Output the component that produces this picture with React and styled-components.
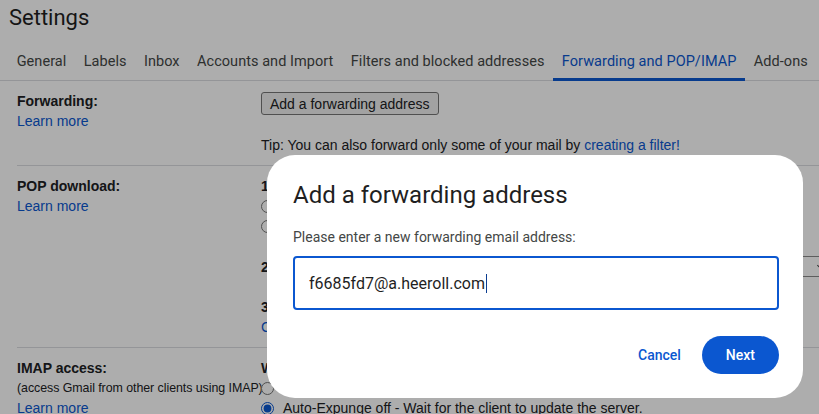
import styled, { createGlobalStyle } from "styled-components";

const GlobalStyle = createGlobalStyle`
  html, body {
    margin: 0;
    padding: 0;
    overflow: hidden;
    background: #fff;
  }

  body {
    font-family: "Liberation Sans", Arial, sans-serif;
    color: #202124;
  }
`;

const Page = styled.div`
  width: 819px;
  height: 414px;
  overflow: hidden;
`;

const Title = styled.h1`
  margin: 0;
  padding: 4px 9px 0;
  font-family: Roboto, "Noto Sans", sans-serif;
  font-size: 22px;
  font-weight: 400;
  line-height: 28px;
  color: #1f1f1f;
`;

const TabBar = styled.div`
  display: flex;
  margin-top: 10px;
  padding-left: 8px;
  border-bottom: 1px solid #dadce0;
`;

const Tab = styled.div`
  position: relative;
  height: 38px;
  padding: 0 8.7px;
  display: flex;
  align-items: center;
  font-family: Roboto, "Noto Sans", sans-serif;
  font-size: 14.5px;
  letter-spacing: 0.05px;
  white-space: nowrap;
  color: ${(props) => (props.$active ? "#0b57d0" : "#444746")};

  ${(props) =>
    props.$active &&
    `
    &::after {
      content: "";
      position: absolute;
      left: 0;
      right: 0;
      bottom: -1px;
      height: 3px;
      background: #0b57d0;
    }
  `}
`;

const Content = styled.div`
  padding-left: 17px;
`;

const Section = styled.div`
  display: grid;
  grid-template-columns: 244px 1fr;
  padding: 10px 0;
  border-bottom: 1px solid #dadce0;
  font-size: 14px;
  line-height: 20px;
`;

const LabelCol = styled.div`
  display: flex;
  flex-direction: column;
  white-space: nowrap;
`;

const SectionLabel = styled.div`
  font-weight: 700;
`;

const SubLabel = styled.div`
  font-size: 12.4px;
  letter-spacing: -0.05px;
`;

const Link = styled.a`
  color: #0b57d0;
  text-decoration: none;
  cursor: pointer;
`;

const ValueCol = styled.div`
  display: flex;
  flex-direction: column;
  white-space: nowrap;
  min-width: 0;
`;

const PlainButton = styled.button`
  align-self: flex-start;
  height: 23px;
  margin-top: 1px;
  padding: 0 8px;
  border: 1px solid #767676;
  border-radius: 3px;
  background: #efefef;
  font-family: "Liberation Sans", Arial, sans-serif;
  font-size: 14px;
  color: #202124;
`;

const Tip = styled.div`
  margin-top: 20px;
`;

const Step = styled.div`
  font-weight: 700;
  margin-top: ${(props) => (props.$first ? "0" : "20px")};
`;

const StepRow = styled.div`
  display: flex;
  align-items: center;
  justify-content: space-between;
  height: 21px;
  margin-top: 20px;
  font-weight: 700;
`;

const FakeSelect = styled.div`
  position: relative;
  width: 260px;
  height: 19px;
  margin-right: -12px;
  border: 1px solid #8a8a8a;
  border-radius: 3px;
  padding-left: 8px;
  font-weight: 400;
  font-size: 13px;
  line-height: 19px;

  &::after {
    content: "";
    position: absolute;
    right: 7px;
    top: 6px;
    width: 4px;
    height: 4px;
    border-right: 1.5px solid #444;
    border-bottom: 1.5px solid #444;
    transform: rotate(45deg);
  }
`;

const RadioRow = styled.label`
  display: flex;
  align-items: center;
  height: 20px;
  gap: 9px;
`;

const Radio = styled.input.attrs({ type: "radio" })`
  width: 13px;
  height: 13px;
  margin: 1px 0 0;
  accent-color: #0b57d0;
`;

const Scrim = styled.div`
  position: fixed;
  inset: 0;
  background: rgba(0, 0, 0, 0.32);
`;

const Dialog = styled.div`
  position: fixed;
  left: 267px;
  top: 155px;
  width: 536px;
  height: 243px;
  box-sizing: border-box;
  padding: 24px 24px 24px 26px;
  border-radius: 28px;
  background: #fff;
  display: flex;
  flex-direction: column;
  font-family: Roboto, "Noto Sans", sans-serif;
`;

const DialogTitle = styled.h2`
  margin: 0;
  font-size: 24px;
  font-weight: 400;
  line-height: 32px;
  color: #1f1f1f;
`;

const DialogLabel = styled.div`
  margin-top: 16px;
  font-size: 14px;
  line-height: 20px;
  color: #444746;
`;

const InputBox = styled.div`
  margin-top: 9px;
  height: 54px;
  box-sizing: border-box;
  border: 2px solid #0b57d0;
  border-radius: 4px;
  padding-left: 14px;
  display: flex;
  align-items: center;
  font-size: 16px;
  color: #1f1f1f;
`;

const Caret = styled.span`
  display: inline-block;
  width: 1px;
  height: 19px;
  margin-left: 1px;
  background: #0b3d91;
`;

const Actions = styled.div`
  display: flex;
  justify-content: flex-end;
  align-items: center;
  margin-top: 26px;
`;

const TextButton = styled.button`
  height: 38px;
  padding: 0 12px;
  margin-right: 9px;
  border: none;
  background: none;
  font-family: Roboto, "Noto Sans", sans-serif;
  font-size: 14px;
  font-weight: 500;
  color: #0b57d0;
`;

const FilledButton = styled.button`
  height: 38px;
  padding: 0 24px;
  border: none;
  border-radius: 19px;
  background: #0b57d0;
  font-family: Roboto, "Noto Sans", sans-serif;
  font-size: 14px;
  font-weight: 500;
  color: #fff;
`;

const tabs = [
  "General",
  "Labels",
  "Inbox",
  "Accounts and Import",
  "Filters and blocked addresses",
  "Forwarding and POP/IMAP",
  "Add-ons",
];

export default function App() {
  return (
    <Page>
      <GlobalStyle />
      <Title>Settings</Title>
      <TabBar>
        {tabs.map((tab) => (
          <Tab key={tab} $active={tab === "Forwarding and POP/IMAP"}>
            {tab}
          </Tab>
        ))}
      </TabBar>

      <Content>
        <Section>
          <LabelCol>
            <SectionLabel>Forwarding:</SectionLabel>
            <Link>Learn more</Link>
          </LabelCol>
          <ValueCol>
            <PlainButton>Add a forwarding address</PlainButton>
            <Tip>
              Tip: You can also forward only some of your mail by{" "}
              <Link>creating a filter!</Link>
            </Tip>
          </ValueCol>
        </Section>

        <Section>
          <LabelCol>
            <SectionLabel>POP download:</SectionLabel>
            <Link>Learn more</Link>
          </LabelCol>
          <ValueCol>
            <Step $first>1. Status: POP is disabled</Step>
            <RadioRow>
              <Radio name="pop" />
              Enable POP for all mail
            </RadioRow>
            <RadioRow>
              <Radio name="pop" />
              Enable POP for mail that arrives from now on
            </RadioRow>
            <StepRow>
              <span>2. When messages are accessed with POP</span>
              <FakeSelect>keep Gmail's copy in the Inbox</FakeSelect>
            </StepRow>
            <Step>3. Configure your email client</Step>
            <Link>Configuration instructions</Link>
          </ValueCol>
        </Section>

        <Section>
          <LabelCol>
            <SectionLabel>IMAP access:</SectionLabel>
            <SubLabel>(access Gmail from other clients using IMAP)</SubLabel>
            <Link>Learn more</Link>
          </LabelCol>
          <ValueCol>
            <Step $first>When I mark a message in IMAP as deleted:</Step>
            <RadioRow>
              <Radio name="imap" />
              Auto-Expunge on - Immediately update the server. (default)
            </RadioRow>
            <RadioRow>
              <Radio name="imap" defaultChecked />
              Auto-Expunge off - Wait for the client to update the server.
            </RadioRow>
          </ValueCol>
        </Section>
      </Content>

      <Scrim />
      <Dialog>
        <DialogTitle>Add a forwarding address</DialogTitle>
        <DialogLabel>Please enter a new forwarding email address:</DialogLabel>
        <InputBox>
          f6685fd7@a.heeroll.com
          <Caret />
        </InputBox>
        <Actions>
          <TextButton>Cancel</TextButton>
          <FilledButton>Next</FilledButton>
        </Actions>
      </Dialog>
    </Page>
  );
}
